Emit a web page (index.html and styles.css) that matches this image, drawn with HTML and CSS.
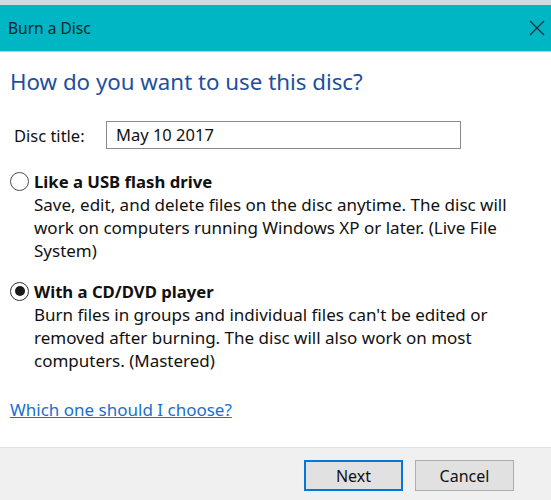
FILE: index.html
```html
<!DOCTYPE html>
<html>
<head>
<meta charset="utf-8">
<link rel="stylesheet" href="styles.css">
</head>
<body>
<div class="dialog">
  <div class="topstrip"></div>
  <div class="titlebar">
    <span class="title">Burn a Disc</span>
    <svg class="close" width="16" height="16" viewBox="0 0 16 16"><path d="M1 1 L15 15 M15 1 L1 15" stroke="#1a3338" stroke-width="1.3" fill="none"/></svg>
  </div>
  <div class="content">
    <h1 class="heading">How do you want to use this disc?</h1>
    <div class="field">
      <label class="field-label">Disc title:</label>
      <div class="input">May 10 2017</div>
    </div>
    <div class="option">
      <div class="option-head"><span class="radio"></span><span class="option-title">Like a USB flash drive</span></div>
      <p class="option-desc">Save, edit, and delete files on the disc anytime. The disc will work on computers running Windows XP or later. (Live File System)</p>
    </div>
    <div class="option">
      <div class="option-head"><span class="radio checked"></span><span class="option-title">With a CD/DVD player</span></div>
      <p class="option-desc">Burn files in groups and individual files can't be edited or removed after burning. The disc will also work on most computers. (Mastered)</p>
    </div>
    <a class="link" href="#">Which one should I choose?</a>
  </div>
  <div class="footer">
    <button class="btn primary">Next</button>
    <button class="btn">Cancel</button>
  </div>
</div>
</body>
</html>
```

FILE: styles.css
```css
html, body {
  margin: 0;
  padding: 0;
  background: #ffffff;
}
.dialog {
  width: 551px;
  height: 500px;
  display: flex;
  flex-direction: column;
  font-family: "Noto Sans", "Open Sans", sans-serif;
  color: #111;
  overflow: hidden;
}
.topstrip {
  height: 5px;
  background: #cddce2;
}
.titlebar {
  height: 46px;
  background: #00b5c4;
  border-bottom: 1px solid #8fe3ec;
  display: flex;
  align-items: center;
  justify-content: space-between;
  padding: 0 6px 0 8px;
}
.title {
  font-size: 15.5px;
  color: #10262c;
}
.content {
  flex: 1;
  padding: 0 10px;
  display: flex;
  flex-direction: column;
}
.heading {
  margin: 15px 0 0 0;
  font-size: 22.3px;
  font-weight: normal;
  line-height: 30px;
  color: #1e4f9e;
}
.field {
  display: flex;
  align-items: center;
  margin-top: 24px;
  padding-left: 4px;
}
.field-label {
  font-size: 16.5px;
  width: 92px;
}
.input {
  width: 344px;
  height: 26px;
  border: 1px solid #8a8a8a;
  padding-left: 9px;
  font-size: 16.5px;
  line-height: 26px;
}
.option {
  margin-top: 21px;
}
.option + .option {
  margin-top: 18px;
}
.option-head {
  display: flex;
  align-items: center;
  height: 22px;
}
.radio {
  width: 19px;
  height: 19px;
  border: 1px solid #4d4d4d;
  border-radius: 50%;
  box-sizing: border-box;
  margin-right: 5px;
  display: flex;
  align-items: center;
  justify-content: center;
}
.radio.checked {
  border: 1.5px solid #333;
}
.radio.checked::after {
  content: "";
  width: 10px;
  height: 10px;
  border-radius: 50%;
  background: #1a1a1a;
}
.option-title {
  font-size: 16.7px;
  font-weight: bold;
}
.option-desc {
  margin: 1px 0 0 24px;
  font-size: 17px;
  line-height: 23px;
  width: 478px;
}
.link {
  margin-top: 26px;
  font-size: 17px;
  line-height: 23px;
  color: #1a6fd0;
  text-decoration: underline;
  align-self: flex-start;
}
.footer {
  height: 53px;
  background: #f0f0f0;
  border-top: 1px solid #e0e0e0;
  display: flex;
  align-items: center;
  justify-content: flex-end;
  gap: 12px;
  padding-right: 37px;
  padding-top: 3px;
  box-sizing: border-box;
}
.btn {
  width: 99px;
  height: 31px;
  background: #e1e1e1;
  border: 1px solid #adadad;
  font-family: "Noto Sans", "Open Sans", sans-serif;
  font-size: 16px;
  color: #111;
  padding: 0;
}
.btn.primary {
  border: 2px solid #0078d7;
}
```
